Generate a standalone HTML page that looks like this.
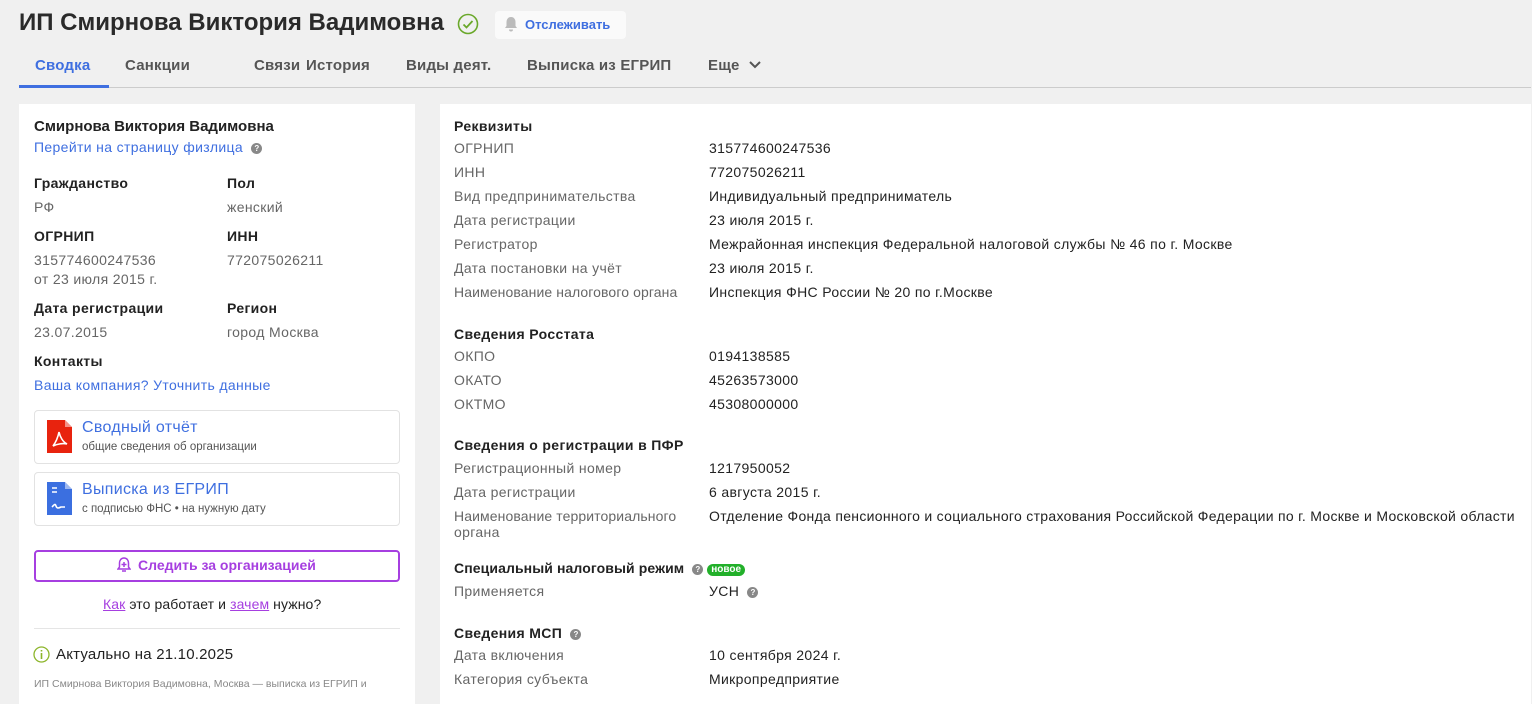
<!DOCTYPE html>
<html><head><meta charset="utf-8"><style>
*{margin:0;padding:0;box-sizing:border-box}
body{width:1532px;height:691px;overflow:hidden;background:#f0f0f0;font-family:"Liberation Sans","Noto Sans CJK SC",sans-serif;color:#222;position:relative}
.a{position:absolute;white-space:nowrap;line-height:1}
.t{font-size:14px;letter-spacing:.35px}
.b{font-weight:bold}
.g{color:#666}
.lnk{color:#3f6fe0}
.q{display:inline-block;width:11px;height:11px;border-radius:50%;background:#888;color:#fff;font-size:8px;font-weight:bold;text-align:center;line-height:11px;vertical-align:1px;margin-left:4px;letter-spacing:0}
.tab{position:absolute;top:57px;font-size:15px;font-weight:bold;color:#555;letter-spacing:.2px}
</style></head><body>
<div class="a b" style="left:19px;top:11px;font-size:24px;color:#2a2a2a">ИП Смирнова Виктория Вадимовна</div>
<svg class="a" style="left:457px;top:13px" width="22" height="22" viewBox="0 0 22 22"><circle cx="11" cy="11" r="9.5" fill="none" stroke="#6aa82a" stroke-width="1.6"/><path d="M6.5 11.5l3 3 6-6.5" fill="none" stroke="#6aa82a" stroke-width="1.8"/></svg>
<div class="a" style="left:495px;top:11px;width:131px;height:28px;background:#fafafa;border-radius:4px"></div>
<svg class="a" style="left:504px;top:16px" width="14" height="16" viewBox="0 0 14 16"><path d="M7 1c-3 0-4.5 2.5-4.5 5v4L1 12h12l-1.5-2V6C11.5 3.5 10 1 7 1zM5 13.5a2 2 0 004 0z" fill="#bbb"/></svg>
<div class="a b" style="left:525px;top:18px;font-size:13px;color:#3f6fe0">Отслеживать</div>

<div class="tab" style="left:35px;color:#3f6fe0">Сводка</div>
<div class="tab" style="left:125px">Санкции</div>
<div class="tab" style="left:254px">Связи</div>
<div class="tab" style="left:306px">История</div>
<div class="tab" style="left:406px">Виды деят.</div>
<div class="tab" style="left:527px">Выписка из ЕГРИП</div>
<div class="tab" style="left:708px">Еще</div>
<svg class="a" style="left:748px;top:60px" width="14" height="10" viewBox="0 0 14 10"><path d="M2 2l5 5 5-5" fill="none" stroke="#555" stroke-width="2"/></svg>
<div class="a" style="left:19px;top:87px;width:1512px;height:1px;background:#ccc"></div>
<div class="a" style="left:19px;top:85px;width:90px;height:3px;background:#3f6fe0"></div>

<div class="a" style="left:19px;top:104px;width:396px;height:600px;background:#fff"></div>
<div class="a b" style="left:34px;top:119px;font-size:15px">Смирнова Виктория Вадимовна</div>
<div class="a t lnk" style="left:34px;top:140px">Перейти на страницу физлица <span class="q">?</span></div>
<div class="a t b" style="left:34px;top:176px">Гражданство</div>
<div class="a t b" style="left:227px;top:176px">Пол</div>
<div class="a t g" style="left:34px;top:200px">РФ</div>
<div class="a t g" style="left:227px;top:200px">женский</div>
<div class="a t b" style="left:34px;top:229px">ОГРНИП</div>
<div class="a t b" style="left:227px;top:229px">ИНН</div>
<div class="a t g" style="left:34px;top:253px">315774600247536</div>
<div class="a t g" style="left:34px;top:272px">от 23 июля 2015 г.</div>
<div class="a t g" style="left:227px;top:253px">772075026211</div>
<div class="a t b" style="left:34px;top:301px">Дата регистрации</div>
<div class="a t b" style="left:227px;top:301px">Регион</div>
<div class="a t g" style="left:34px;top:325px">23.07.2015</div>
<div class="a t g" style="left:227px;top:325px">город Москва</div>
<div class="a t b" style="left:34px;top:354px">Контакты</div>
<div class="a t lnk" style="left:34px;top:378px">Ваша компания? Уточнить данные</div>

<div class="a" style="left:34px;top:410px;width:366px;height:54px;border:1px solid #e2e2e2;border-radius:4px"></div>
<svg class="a" style="left:47px;top:420px" width="25" height="33" viewBox="0 0 25 33"><path d="M0 0h18l7 7v26H0z" fill="#e8230e"/><path d="M18 0v7h7" fill="#fff" opacity=".5"/><path d="M6 26c3-4 5-9 6-14 1 5 4 10 8 12-4-1-10 0-14 2z" fill="none" stroke="#fff" stroke-width="1.6"/></svg>
<div class="a lnk" style="left:82px;top:420px;font-size:16px;letter-spacing:.3px">Сводный отчёт</div>
<div class="a" style="left:82px;top:442px;font-size:11.5px;color:#555">общие сведения об организации</div>

<div class="a" style="left:34px;top:472px;width:366px;height:54px;border:1px solid #e2e2e2;border-radius:4px"></div>
<svg class="a" style="left:47px;top:482px" width="25" height="33" viewBox="0 0 25 33"><path d="M0 0h18l7 7v26H0z" fill="#3b6fe0"/><path d="M18 0v7h7" fill="#fff" opacity=".5"/><path d="M5 6h5M5 10h5" stroke="#fff" stroke-width="1.6"/><path d="M5 25c2-2 3-4 4-1s3 2 5 1h4" fill="none" stroke="#fff" stroke-width="1.6"/></svg>
<div class="a lnk" style="left:82px;top:482px;font-size:16px;letter-spacing:.3px">Выписка из ЕГРИП</div>
<div class="a" style="left:82px;top:504px;font-size:11.5px;color:#555">с подписью ФНС • на нужную дату</div>

<div class="a" style="left:34px;top:550px;width:366px;height:32px;border:2px solid #a63fe0;border-radius:4px"></div>
<svg class="a" style="left:117px;top:556px" width="14" height="18" viewBox="0 0 14 18"><path d="M7 2c-3 0-4.5 2.5-4.5 5v4L1 13h12l-1.5-2V7C11.5 4.5 10 2 7 2z" fill="none" stroke="#a63fe0" stroke-width="1.5"/><path d="M7 6v5M4.5 8.5h5" stroke="#a63fe0" stroke-width="1.5"/><path d="M5 15h4" stroke="#a63fe0" stroke-width="1.5"/></svg>
<div class="a b" style="left:138px;top:558px;font-size:14px;color:#a63fe0">Следить за организацией</div>
<div class="a t" style="left:103px;top:597px;letter-spacing:.1px"><span style="color:#a63fe0;text-decoration:underline">Как</span> это работает и <span style="color:#a63fe0;text-decoration:underline">зачем</span> нужно?</div>
<div class="a" style="left:34px;top:628px;width:366px;height:1px;background:#e5e5e5"></div>
<svg class="a" style="left:33px;top:646px" width="17" height="17" viewBox="0 0 17 17"><circle cx="8.5" cy="8.5" r="7.5" fill="none" stroke="#8cb52a" stroke-width="1.3"/><path d="M8.5 7v6M8.5 4v1.5" stroke="#8cb52a" stroke-width="1.6"/></svg>
<div class="a t" style="left:56px;top:647px;font-size:15px;letter-spacing:.2px">Актуально на 21.10.2025</div>
<div class="a" style="left:34px;top:679px;font-size:10.5px;color:#888">ИП Смирнова Виктория Вадимовна, Москва — выписка из ЕГРИП и</div>

<div class="a" style="left:440px;top:104px;width:1091px;height:600px;background:#fff"></div>
<div class="a t b" style="left:454px;top:119px">Реквизиты</div>
<div class="a t g" style="left:454px;top:141px">ОГРНИП</div><div class="a t" style="left:709px;top:141px">315774600247536</div>
<div class="a t g" style="left:454px;top:165px">ИНН</div><div class="a t" style="left:709px;top:165px">772075026211</div>
<div class="a t g" style="left:454px;top:189px">Вид предпринимательства</div><div class="a t" style="left:709px;top:189px">Индивидуальный предприниматель</div>
<div class="a t g" style="left:454px;top:213px">Дата регистрации</div><div class="a t" style="left:709px;top:213px">23 июля 2015 г.</div>
<div class="a t g" style="left:454px;top:237px">Регистратор</div><div class="a t" style="left:709px;top:237px">Межрайонная инспекция Федеральной налоговой службы № 46 по г. Москве</div>
<div class="a t g" style="left:454px;top:261px">Дата постановки на учёт</div><div class="a t" style="left:709px;top:261px">23 июля 2015 г.</div>
<div class="a t g" style="left:454px;top:285px;letter-spacing:.1px">Наименование налогового органа</div><div class="a t" style="left:709px;top:285px">Инспекция ФНС России № 20 по г.Москве</div>

<div class="a t b" style="left:454px;top:327px">Сведения Росстата</div>
<div class="a t g" style="left:454px;top:349px">ОКПО</div><div class="a t" style="left:709px;top:349px">0194138585</div>
<div class="a t g" style="left:454px;top:373px">ОКАТО</div><div class="a t" style="left:709px;top:373px">45263573000</div>
<div class="a t g" style="left:454px;top:397px">ОКТМО</div><div class="a t" style="left:709px;top:397px">45308000000</div>

<div class="a t b" style="left:454px;top:438px">Сведения о регистрации в ПФР</div>
<div class="a t g" style="left:454px;top:461px">Регистрационный номер</div><div class="a t" style="left:709px;top:461px">1217950052</div>
<div class="a t g" style="left:454px;top:485px">Дата регистрации</div><div class="a t" style="left:709px;top:485px">6 августа 2015 г.</div>
<div class="a t g" style="left:454px;top:509px;letter-spacing:.1px">Наименование территориального</div><div class="a t" style="left:709px;top:509px;letter-spacing:.3px">Отделение Фонда пенсионного и социального страхования Российской Федерации по г. Москве и Московской области</div>
<div class="a t g" style="left:454px;top:525px">органа</div>

<div class="a t b" style="left:454px;top:561px;letter-spacing:.1px">Специальный налоговый режим <span class="q">?</span> <span style="display:inline-block;background:#22b02a;color:#fff;font-size:10px;border-radius:7px;padding:1px 4px;vertical-align:1px;letter-spacing:0">новое</span></div>
<div class="a t g" style="left:454px;top:584px">Применяется</div><div class="a t" style="left:709px;top:584px">УСН <span class="q">?</span></div>

<div class="a t b" style="left:454px;top:626px">Сведения МСП <span class="q">?</span></div>
<div class="a t g" style="left:454px;top:648px">Дата включения</div><div class="a t" style="left:709px;top:648px">10 сентября 2024 г.</div>
<div class="a t g" style="left:454px;top:672px">Категория субъекта</div><div class="a t" style="left:709px;top:672px">Микропредприятие</div>
</body></html>
